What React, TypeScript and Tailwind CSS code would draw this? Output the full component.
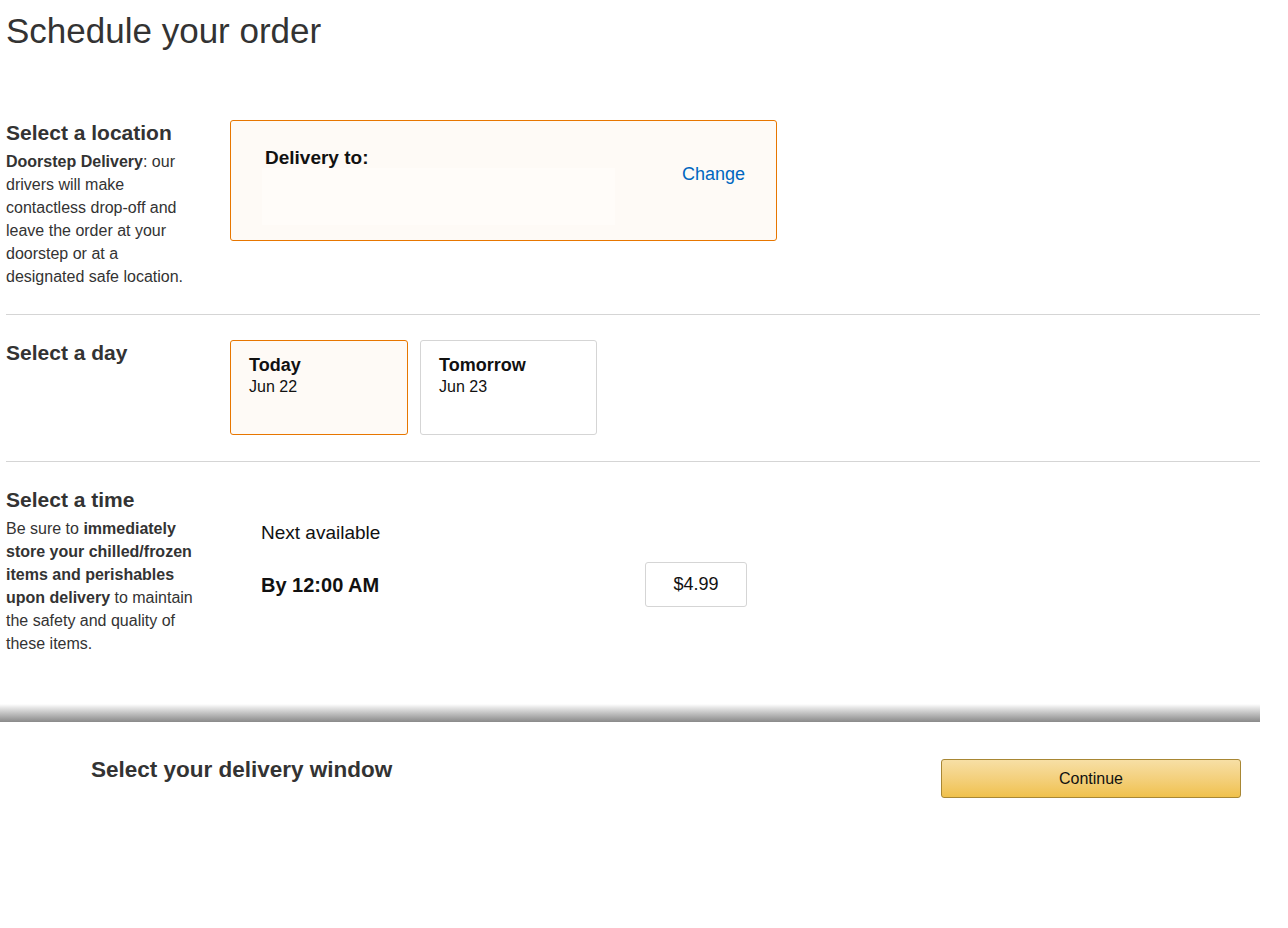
const font = { fontFamily: '"Liberation Sans", Arial, sans-serif' }

function Section({ title, children, right, last }: { title: string; children?: React.ReactNode; right: React.ReactNode; last?: boolean }) {
    return (
        <div className={`flex pt-[25px] ${last ? "pb-[49px]" : "pb-[26px] border-b border-[#d5d5d5]"}`}>
            <div className="w-[224px] shrink-0 pr-[30px]">
                <h2 className="text-[21px] leading-[26px] font-bold text-[#333]">{title}</h2>
                {children && <div className="text-[16px] leading-[23px] text-[#333] mt-[4px]">{children}</div>}
            </div>
            <div className="flex-1">{right}</div>
        </div>
    )
}

export default function App() {
    return (
        <div style={font} className="w-[1288px] h-[928px] bg-white text-[#111]">
            <div className="w-[1260px] pl-[6px]">
                <h1 className="text-[35px] leading-[36px] text-[#333] pt-[13px] mb-[46px]">Schedule your order</h1>

                <Section
                    title="Select a location"
                    right={
                        <div className="w-[547px] h-[121px] border border-[#e77600] rounded-[3px] bg-[#fefaf6] flex items-start justify-between pl-[34px] pr-[31px] pt-[26px]">
                            <div>
                                <div className="text-[19px] leading-[22px] font-bold text-[#111]">Delivery to:</div>
                                <div className="w-[353px] h-[57px] bg-[#fffcf9] ml-[-3px] mt-[-1px]"></div>
                            </div>
                            <a className="text-[18px] leading-[22px] text-[#0066c0] mt-[16px] cursor-pointer">Change</a>
                        </div>
                    }
                >
                    <b>Doorstep Delivery</b>: our drivers will make contactless drop-off and leave the order at your doorstep or at a designated safe location.
                </Section>

                <Section
                    title="Select a day"
                    right={
                        <div className="flex gap-[12px]">
                            <div className="w-[178px] h-[95px] border border-[#e77600] rounded-[3px] bg-[#fefaf6] pl-[18px] pt-[13px]">
                                <div className="text-[18px] leading-[22px] font-bold text-[#111]">Today</div>
                                <div className="text-[16px] leading-[22px] text-[#111]">Jun 22</div>
                            </div>
                            <div className="w-[177px] h-[95px] border border-[#d5d5d5] rounded-[3px] bg-white pl-[18px] pt-[13px]">
                                <div className="text-[18px] leading-[22px] font-bold text-[#111]">Tomorrow</div>
                                <div className="text-[16px] leading-[22px] text-[#111]">Jun 23</div>
                            </div>
                        </div>
                    }
                />

                <Section
                    last
                    title="Select a time"
                    right={
                        <div className="w-[547px] pl-[31px] pr-[30px] pt-[34px]">
                            <div className="text-[19px] leading-[24px] text-[#111]">Next available</div>
                            <div className="flex items-center justify-between mt-[17px]">
                                <div className="text-[20px] leading-[24px] font-bold text-[#111]">By 12:00 AM</div>
                                <div className="w-[102px] h-[45px] border border-[#d5d5d5] rounded-[3px] flex items-center justify-center text-[18px] text-[#111]">$4.99</div>
                            </div>
                        </div>
                    }
                >
                    Be sure to <b>immediately store your chilled/frozen items and perishables upon delivery</b> to maintain the safety and quality of these items.
                </Section>
            </div>

            <div className="w-[1260px] h-[18px] bg-gradient-to-b from-white to-[#8a8a8a]"></div>
            <div className="w-[1260px] flex items-start justify-between pl-[91px] pr-[19px] pt-[35px]">
                <div className="text-[22.5px] leading-[26px] font-bold text-[#333]">Select your delivery window</div>
                <button className="w-[300px] h-[39px] mt-[2px] border border-[#a88734] rounded-[3px] bg-gradient-to-b from-[#f7dfa5] to-[#f0c14b] text-[16px] text-[#111]">Continue</button>
            </div>
        </div>
    )
}
